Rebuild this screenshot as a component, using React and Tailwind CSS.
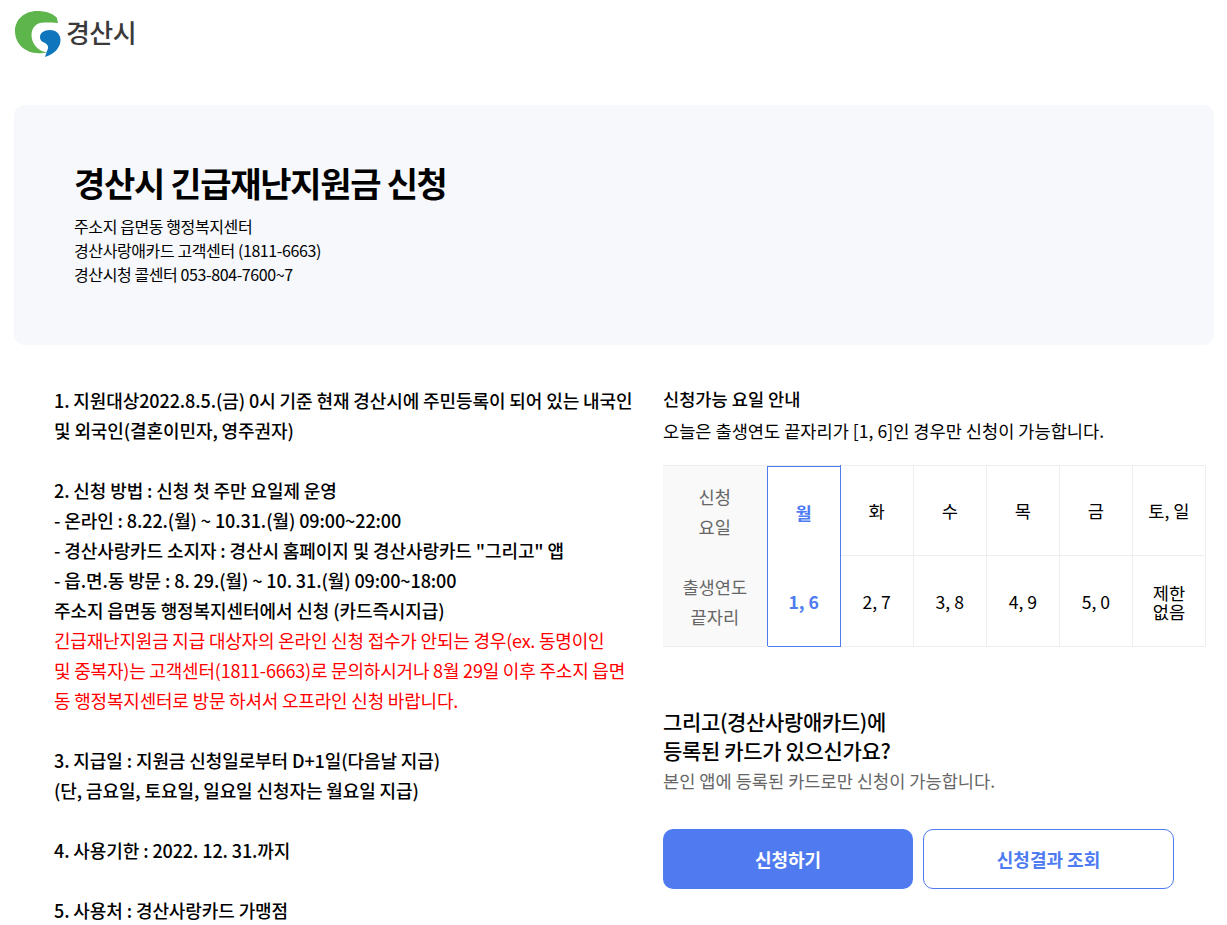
const F = '"Noto Sans CJK KR","Noto Sans",sans-serif';

function Logo() {
  return (
    <div className="flex items-center h-[66px] pl-[14px]">
      <svg width="48" height="50" viewBox="14 8 48 50" className="shrink-0">
        <path d="M56.700 17.500C52 13 45 11 37 11 24 11 15 20 15 31c0 12 9 21 21 22 4 .5 8 .3 11-.5-9-1.500-15.500-8.500-15.500-17.500 0-8 5.500-12.500 12.500-12.500 5 0 10 0 14 .5z" fill="#5eb54c"/>
        <path d="M50 30c-6 0-10 3-10 7 0 4 3 5 5 6 3 1.500 4 4.500 2 8-.5 2-1.500 4-2 6 9-3 15.500-9 15.500-17C60.500 34 56 30 50 30z" fill="#0f75bd"/>
      </svg>
      <span className="ml-[4px] -mt-[2px] text-[26px] leading-none font-medium text-[#3a3a3a] tracking-[-0.6px]">경산시</span>
    </div>
  );
}

function Hero() {
  return (
    <section className="ml-[14px] w-[1200px] mt-[39px] h-[240px] rounded-[10px] bg-[#f6f8fb] pl-[60px] pt-[54px] text-black">
      <h1 className="text-[34px] leading-[48px] font-bold tracking-[-1.3px]">경산시 긴급재난지원금 신청</h1>
      <div className="mt-[7px] text-[16px] leading-[24px] tracking-[-0.4px]">
        <p>주소지 읍면동 행정복지센터</p>
        <p>경산사랑애카드 고객센터 (1811-6663)</p>
        <p>경산시청 콜센터 053-804-7600~7</p>
      </div>
    </section>
  );
}

function Notice() {
  return (
    <div className="w-[584px] shrink-0 ml-[54px] -mt-[1px] text-[18px] leading-[30px] font-medium text-black tracking-[-0.1px]">
      <p>1. 지원대상2022.8.5.(금) 0시 기준 현재 경산시에 주민등록이 되어 있는 내국인</p>
      <p>및 외국인(결혼이민자, 영주권자)</p>
      <p>&nbsp;</p>
      <p>2. 신청 방법 : 신청 첫 주만 요일제 운영</p>
      <p>- 온라인 : 8.22.(월) ~ 10.31.(월) 09:00~22:00</p>
      <p>- 경산사랑카드 소지자 : 경산시 홈페이지 및 경산사랑카드 "그리고" 앱</p>
      <p>- 읍.면.동 방문 : 8. 29.(월) ~ 10. 31.(월) 09:00~18:00</p>
      <p>주소지 읍면동 행정복지센터에서 신청 (카드즉시지급)</p>
      <div className="font-normal text-[#ff0000] tracking-[-0.2px]">
        <p>긴급재난지원금 지급 대상자의 온라인 신청 접수가 안되는 경우(ex. 동명이인</p>
        <p>및 중복자)는 고객센터(1811-6663)로 문의하시거나 8월 29일 이후 주소지 읍면</p>
        <p>동 행정복지센터로 방문 하셔서 오프라인 신청 바랍니다.</p>
      </div>
      <p>&nbsp;</p>
      <p>3. 지급일 : 지원금 신청일로부터 D+1일(다음날 지급)</p>
      <p>(단, 금요일, 토요일, 일요일 신청자는 월요일 지급)</p>
      <p>&nbsp;</p>
      <p>4. 사용기한 : 2022. 12. 31.까지</p>
      <p>&nbsp;</p>
      <p>5. 사용처 : 경산사랑카드 가맹점</p>
    </div>
  );
}

const days = ['화', '수', '목', '금', '토, 일'];
const nums = ['2, 7', '3, 8', '4, 9', '5, 0'];
const td = 'border border-[#eeeeee] text-center align-middle p-0 pt-[2px] text-black';
const th = 'bg-[#f9f9f9] text-center align-middle p-0 pt-[2px] font-normal text-[#666666] leading-[30px]';

function DayTable() {
  return (
    <table className="mt-[19px] w-[543px] table-fixed border-collapse text-[17.6px]">
      <colgroup>
        <col className="w-[104px]" />
        <col className="w-[73px]" />
        <col className="w-[73px]" />
        <col className="w-[73px]" />
        <col className="w-[73px]" />
        <col className="w-[73px]" />
        <col className="w-[73px]" />
      </colgroup>
      <tbody>
        <tr className="h-[90px]">
          <th className={th + ' border-t border-b-0 border-[#eeeeee]'}>신청<br />요일</th>
          <td className="border border-[#4e7bf1] border-t-[#eeeeee] border-b-0 shadow-[inset_0_1px_0_#4e7bf1] text-center align-middle p-0 pt-[4px] font-bold text-[#4e7bf1]">월</td>
          {days.map(d => <td key={d} className={td}>{d}</td>)}
        </tr>
        <tr className="h-[91px]">
          <th className={th + ' border-b border-t-0 border-[#eeeeee]'}>출생연도<br />끝자리</th>
          <td className="border border-[#4e7bf1] border-t-0 text-center align-middle p-0 pt-[2px] font-bold text-[#4e7bf1]">1, 6</td>
          {nums.map(d => <td key={d} className={td}>{d}</td>)}
          <td className={td + ' leading-[19px]'}>제한<br />없음</td>
        </tr>
      </tbody>
    </table>
  );
}

function Side() {
  return (
    <div className="ml-[25px] w-[543px] shrink-0 text-black">
      <p className="-mt-[2px] mb-[2px] text-[17.6px] leading-[30px] font-medium">신청가능 요일 안내</p>
      <p className="text-[17.6px] leading-[30px]">오늘은 출생연도 끝자리가 [1, 6]인 경우만 신청이 가능합니다.</p>
      <DayTable />
      <h2 className="mt-[60px] text-[21px] leading-[29px] font-medium tracking-[-0.35px]">그리고(경산사랑애카드)에<br />등록된 카드가 있으신가요?</h2>
      <p className="mt-[1px] text-[17.6px] leading-[30px] text-[#666666]">본인 앱에 등록된 카드로만 신청이 가능합니다.</p>
      <div className="mt-[33px] flex gap-[10px]">
        <button className="w-[250px] h-[60px] rounded-[10px] bg-[#507bf0] text-white text-[18px] font-bold">신청하기</button>
        <button className="w-[251px] h-[60px] rounded-[10px] bg-white border border-[#4e7bf1] text-[#4e7bf1] text-[18px] font-bold">신청결과 조회</button>
      </div>
    </div>
  );
}

export default function App() {
  return (
    <div className="h-[925px] overflow-hidden bg-white" style={{ fontFamily: F }}>
      <Logo />
      <Hero />
      <main className="flex mt-[41px]">
        <Notice />
        <Side />
      </main>
    </div>
  );
}
